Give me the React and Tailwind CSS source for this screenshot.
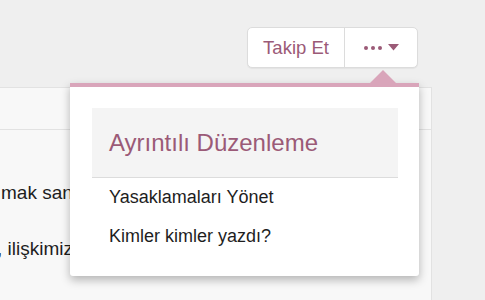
export default function App() {
  return (
    <div
      className="relative w-[485px] h-[300px] overflow-hidden bg-[#efefef]"
      style={{ fontFamily: '"Liberation Sans", Arial, sans-serif' }}
    >
      <div className="flex justify-end pt-[27px] pr-[67px]">
        <div className="flex h-[41px] rounded-[5px] border border-[#dcdcdc] bg-white shadow-[0_1px_1px_rgba(0,0,0,0.05)]">
          <button className="flex w-[97px] items-center justify-center text-[18.5px] text-[#9b5a77] border-r border-[#dcdcdc]">
            Takip Et
          </button>
          <button className="flex w-[72px] items-center justify-center gap-[6px] text-[#9b5a77]">
            <span className="flex gap-[3px]">
              <span className="h-[4px] w-[4px] rounded-full bg-[#9b5a77]" />
              <span className="h-[4px] w-[4px] rounded-full bg-[#9b5a77]" />
              <span className="h-[4px] w-[4px] rounded-full bg-[#9b5a77]" />
            </span>
            <svg width="11" height="7" viewBox="0 0 11 7">
              <path d="M0 0 L11 0 L5.5 6.5 Z" fill="#9b5a77" />
            </svg>
          </button>
        </div>
      </div>

      <div className="mt-[19px] w-[432px] h-[220px] bg-[#f8f8f8] border-r border-t border-[#e2e2e2]">
        <div className="h-[42px] border-b border-[#e2e2e2]" />
        <div className="w-[70px] overflow-hidden pt-[52px] text-[19px] text-[#1e1e1e] leading-[22px]">
          <p className="ml-[1px] whitespace-nowrap">mak sanıyorum</p>
          <p className="mt-[34px] ml-[-3px] whitespace-nowrap">, ilişkimizi</p>
        </div>
      </div>

      <div className="absolute left-[70px] top-[83px] w-[349px] h-[193px] bg-white border-t-4 border-[#d9a5ba] rounded-b-[3px] shadow-[0_4px_10px_rgba(0,0,0,0.28)]">
        <svg
          className="absolute left-[299px] top-[-17px]"
          width="28"
          height="14"
          viewBox="0 0 28 14"
        >
          <path d="M0 14 L14 0 L28 14 Z" fill="#d9a5ba" />
        </svg>
        <div className="px-[21px] pt-[21px] pl-[22px]">
          <div className="flex h-[70px] items-center bg-[#f4f4f4] border-b border-[#dcdcdc] pl-[17px]">
            <span className="text-[24px] text-[#9b5a77]">Ayrıntılı Düzenleme</span>
          </div>
          <div className="pl-[17px] pt-[8px] text-[18px] text-[#1e1e1e]">
            <div className="h-[22px] leading-[22px]">Yasaklamaları Yönet</div>
            <div className="mt-[17px] h-[22px] leading-[22px]">Kimler kimler yazdı?</div>
          </div>
        </div>
      </div>
    </div>
  );
}
